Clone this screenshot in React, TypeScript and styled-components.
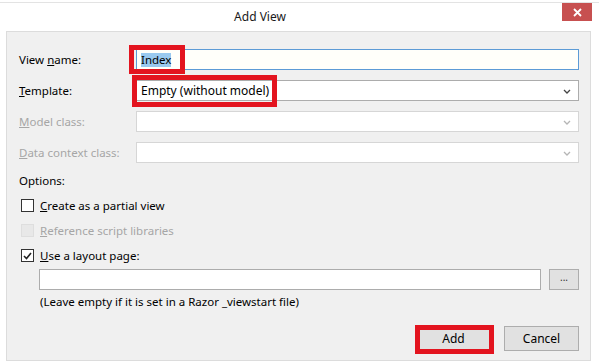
import styled, { createGlobalStyle } from 'styled-components';

const GlobalStyle = createGlobalStyle`
  html, body {
    margin: 0;
    padding: 0;
    background: #ffffff;
  }
  body {
    font-family: "Noto Sans", "Open Sans", sans-serif;
    font-size: 11.5px;
    color: #000000;
  }
`;

const Window = styled.div`
  width: 599px;
  height: 364px;
  background: #ffffff;
  display: flex;
  flex-direction: column;
  box-sizing: border-box;
  border-top: 1px solid #e3e3e3;
  margin-top: 2px;
`;

const TitleBar = styled.div`
  height: 28px;
  display: flex;
  align-items: flex-start;
  position: relative;
`;

const Title = styled.div`
  width: 520px;
  text-align: center;
  line-height: 28px;
  font-size: 12px;
  color: #1a1a1a;
`;

const CloseButton = styled.div`
  position: absolute;
  top: 0;
  left: 562px;
  width: 30px;
  height: 18px;
  background: #c75050;
  display: flex;
  align-items: center;
  justify-content: center;
`;

const Panel = styled.div`
  margin: 0 8px 5px 6px;
  flex: 1;
  background: #f0f0f0;
  border: 1px solid #dcdcdc;
  box-sizing: border-box;
  padding: 17px 11px 0 12px;
  display: flex;
  flex-direction: column;
`;

const FieldGrid = styled.div`
  display: grid;
  grid-template-columns: 117px 1fr;
  row-gap: 10px;
  align-items: center;
`;

const Label = styled.label<{ $disabled?: boolean }>`
  color: ${({ $disabled }) => ($disabled ? '#a6a6a6' : '#000000')};
  line-height: 16px;
  white-space: nowrap;
`;

const FieldBox = styled.div<{ $focused?: boolean; $disabled?: boolean }>`
  position: relative;
  height: 21px;
  box-sizing: border-box;
  border: 1px solid
    ${({ $focused, $disabled }) =>
      $focused ? '#5c9bd6' : $disabled ? '#d6d6d6' : '#acacac'};
  background: ${({ $focused }) => ($focused ? '#fffffa' : '#ffffff')};
  display: flex;
  align-items: center;
  padding-left: 4px;
`;

const Selected = styled.span`
  background: #99c9ef;
  line-height: 14px;
  color: #000000;
`;

const ValueText = styled.span`
  line-height: 16px;
  font-size: 12px;
  color: #000000;
`;

const Chevron = styled.svg`
  position: absolute;
  right: 7px;
  top: 8px;
`;

const Highlight = styled.div<{ $left: number; $top: number; $w: number; $h: number }>`
  position: absolute;
  left: ${({ $left }) => $left}px;
  top: ${({ $top }) => $top}px;
  width: ${({ $w }) => $w}px;
  height: ${({ $h }) => $h}px;
  border: 5px solid #e3141f;
  box-sizing: border-box;
  pointer-events: none;
`;

const SectionTitle = styled.div`
  margin-top: 10px;
  margin-bottom: 4px;
  line-height: 16px;
`;

const CheckRow = styled.div<{ $disabled?: boolean }>`
  height: 25px;
  display: flex;
  align-items: center;
  gap: 6px;
  padding-left: 2px;
  color: ${({ $disabled }) => ($disabled ? '#a6a6a6' : '#000000')};
`;

const Box = styled.div<{ $disabled?: boolean }>`
  width: 13px;
  height: 13px;
  box-sizing: border-box;
  border: 1px solid ${({ $disabled }) => ($disabled ? '#dedede' : '#333333')};
  background: ${({ $disabled }) => ($disabled ? '#e8e8e8' : '#ffffff')};
  display: flex;
  align-items: center;
  justify-content: center;
`;

const LayoutRow = styled.div`
  margin-top: 1px;
  margin-left: 20px;
  display: flex;
  gap: 8px;
`;

const LayoutInput = styled.div`
  flex: 1;
  height: 21px;
  box-sizing: border-box;
  border: 1px solid #acacac;
  background: #ffffff;
`;

const BrowseButton = styled.div`
  width: 30px;
  height: 21px;
  box-sizing: border-box;
  border: 1px solid #adadad;
  background: #e1e1e1;
  font-size: 10px;
  line-height: 15px;
  text-align: center;
  color: #333333;
`;

const Hint = styled.div`
  margin-top: 4px;
  margin-left: 21px;
  line-height: 16px;
`;

const ButtonBar = styled.div`
  margin-top: 16px;
  display: flex;
  justify-content: flex-end;
  gap: 13px;
`;

const Button = styled.div`
  position: relative;
  width: 75px;
  height: 25px;
  box-sizing: border-box;
  border: 1px solid #adadad;
  background: #e1e1e1;
  display: flex;
  align-items: center;
  justify-content: center;
  line-height: 16px;
  font-size: 12px;
`;

const Down = ({ light }: { light?: boolean }) => (
  <Chevron width="8" height="5" viewBox="0 0 8 5">
    <path d="M1 1 L4 4 L7 1" fill="none" stroke={light ? '#b5b5b5' : '#444444'} strokeWidth="1.3" />
  </Chevron>
);

export default function App() {
  return (
    <>
      <GlobalStyle />
      <Window>
        <TitleBar>
          <Title>Add View</Title>
          <CloseButton>
            <svg width="9" height="9" viewBox="0 0 9 9">
              <path d="M1 1 L8 8 M8 1 L1 8" stroke="#ffffff" strokeWidth="1.8" />
            </svg>
          </CloseButton>
        </TitleBar>
        <Panel>
          <FieldGrid>
            <Label>
              View <u>n</u>ame:
            </Label>
            <FieldBox $focused>
              <Selected>Index</Selected>
              <Highlight $left={-8} $top={-5} $w={56} $h={29} />
            </FieldBox>

            <Label>
              <u>T</u>emplate:
            </Label>
            <FieldBox>
              <ValueText>Empty (without model)</ValueText>
              <Down />
              <Highlight $left={-5} $top={-6} $w={145} $h={32} />
            </FieldBox>

            <Label $disabled>
              <u>M</u>odel class:
            </Label>
            <FieldBox $disabled>
              <Down light />
            </FieldBox>

            <Label $disabled>
              <u>D</u>ata context class:
            </Label>
            <FieldBox $disabled>
              <Down light />
            </FieldBox>
          </FieldGrid>

          <SectionTitle>Options:</SectionTitle>
          <CheckRow>
            <Box />
            <span>
              <u>C</u>reate as a partial view
            </span>
          </CheckRow>
          <CheckRow $disabled>
            <Box $disabled />
            <span>
              <u>R</u>eference script libraries
            </span>
          </CheckRow>
          <CheckRow>
            <Box>
              <svg width="9" height="8" viewBox="0 0 9 8">
                <path d="M1 4 L3.5 6.5 L8 1" fill="none" stroke="#222222" strokeWidth="1.6" />
              </svg>
            </Box>
            <span>
              <u>U</u>se a layout page:
            </span>
          </CheckRow>
          <LayoutRow>
            <LayoutInput />
            <BrowseButton>...</BrowseButton>
          </LayoutRow>
          <Hint>(Leave empty if it is set in a Razor _viewstart file)</Hint>

          <ButtonBar>
            <Button>
              Add
              <Highlight $left={-2} $top={-2} $w={79} $h={29} />
            </Button>
            <Button>Cancel</Button>
          </ButtonBar>
        </Panel>
      </Window>
    </>
  );
}
